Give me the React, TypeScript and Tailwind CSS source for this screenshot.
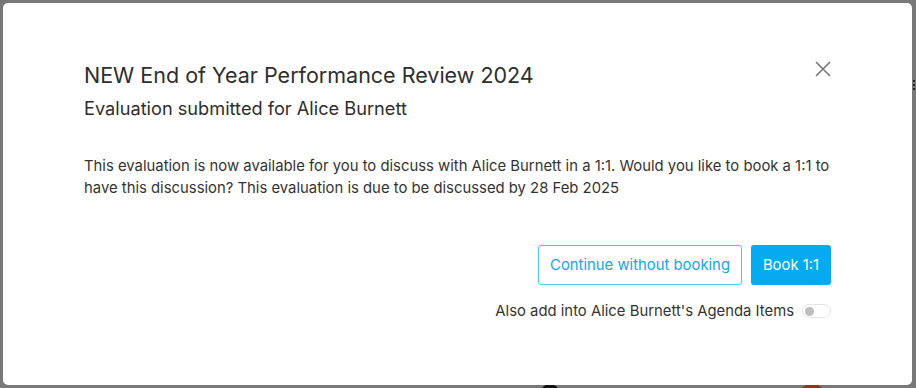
import React from "react";

export default function App() {
  return (
    <div
      className="relative w-[916px] h-[388px] bg-[#787878] overflow-hidden pt-[3px] pl-[3px]"
      style={{ fontFamily: "Inter, 'Noto Sans', sans-serif" }}
    >
      <div className="absolute right-[1px] top-[80px] flex flex-col gap-[2px]">
        <div className="w-[2px] h-[2px] bg-[#222]" />
        <div className="w-[2px] h-[2px] bg-[#222]" />
        <div className="w-[2px] h-[2px] bg-[#222]" />
      </div>
      <div className="absolute left-[542px] top-[385px] w-[16px] h-[10px] rounded-full bg-[#111]" />
      <div className="absolute left-[802px] top-[385px] w-[20px] h-[10px] rounded-full bg-[#8a3a1a]" />
      <div className="relative w-[909px] h-[382px] bg-white rounded-[5px] pl-[81px] pr-[81px] pt-[58px]">
        <button className="absolute right-[79px] top-[56px] text-[#777]">
          <svg width="20" height="20" viewBox="0 0 20 20" fill="none" stroke="currentColor" strokeWidth="1.6">
            <path d="M3 3 L17 17 M17 3 L3 17" />
          </svg>
        </button>
        <h1 className="text-[21.5px] leading-[28px] text-[#2e2e2e] font-normal">
          NEW End of Year Performance Review 2024
        </h1>
        <h2 className="mt-[7px] text-[18.2px] leading-[24px] text-[#2e2e2e] font-normal">
          Evaluation submitted for Alice Burnett
        </h2>
        <p className="mt-[35px] text-[14.85px] leading-[22px] text-[#333]">
          This evaluation is now available for you to discuss with Alice Burnett in a 1:1. Would you like to book a 1:1 to
          have this discussion? This evaluation is due to be discussed by 28 Feb 2025
        </p>
        <div className="mt-[46px] flex justify-end gap-[9px]">
          <button className="h-[40px] px-[11px] border border-[#4cc3f5] rounded-[3px] text-[14.85px] text-[#14a6e6]">
            Continue without booking
          </button>
          <button className="h-[40px] w-[80px] bg-[#05aaf0] rounded-[3px] text-[14.85px] text-white">
            Book 1:1
          </button>
        </div>
        <div className="mt-[16px] flex justify-end items-center gap-[8px]">
          <span className="text-[14.85px] leading-[20px] text-[#333]">Also add into Alice Burnett's Agenda Items</span>
          <div className="w-[29px] h-[14px] rounded-full border border-[#e4e4e4] bg-white flex items-center pl-[2px]">
            <div className="w-[9px] h-[9px] rounded-full bg-[#bdbdbd]" />
          </div>
        </div>
      </div>
    </div>
  );
}
